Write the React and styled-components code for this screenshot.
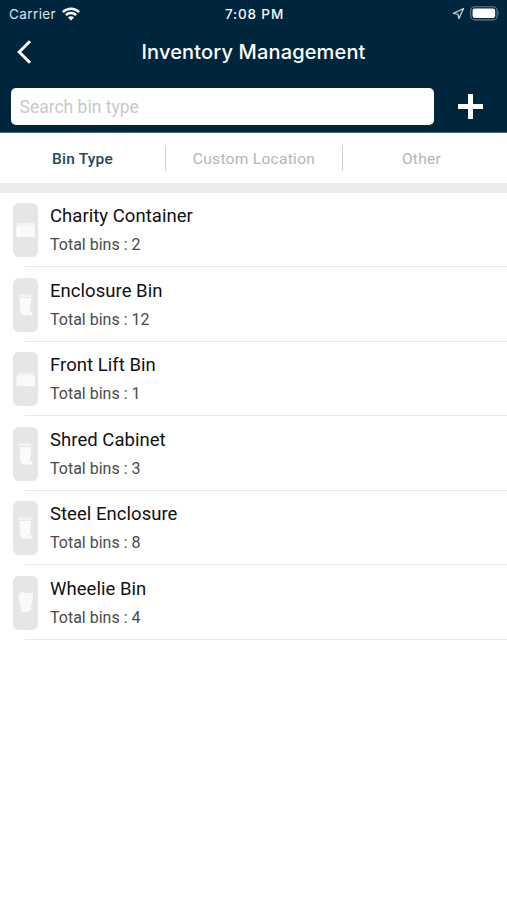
import React from "react";
import styled, { createGlobalStyle } from "styled-components";

const Global = createGlobalStyle`
  * { box-sizing: border-box; }
  body { margin: 0; background: #fff; font-family: Roboto, sans-serif; }
`;

const Screen = styled.main`
  display: flex;
  flex-direction: column;
  height: 900px;
  background: #fff;
  overflow: hidden;
`;

const Header = styled.header`
  height: 133px;
  background: #00263e;
  border-bottom: 1px solid #506a7b;
  color: #fff;
  font-family: Inter, sans-serif;
`;

const StatusBar = styled.div`
  display: grid;
  grid-template-columns: 1fr auto 1fr;
  align-items: center;
  height: 27px;
  padding: 0 7px 0 9px;
`;

const Carrier = styled.div`
  display: flex;
  align-items: center;
  gap: 6px;
  font-size: 13.5px;
  letter-spacing: 0.4px;
  color: #dbe3e8;
`;

const Clock = styled.time`
  font-size: 13.5px;
  font-weight: 500;
  letter-spacing: 0.85px;
  color: #f6f8f9;
`;

const Indicators = styled.div`
  display: flex;
  justify-content: flex-end;
  align-items: center;
  gap: 5px;
`;

const TitleBar = styled.div`
  display: grid;
  grid-template-columns: 48px 1fr 48px;
  align-items: center;
  height: 49.5px;
`;

const IconButton = styled.button`
  display: flex;
  align-items: center;
  justify-content: center;
  padding: 0;
  border: 0;
  background: none;
  color: #fff;
`;

const Title = styled.h1`
  margin: 0;
  padding-top: 1px;
  text-align: center;
  font-size: 20px;
  font-weight: 500;
  letter-spacing: 0.15px;
  white-space: nowrap;
`;

const SearchBar = styled.div`
  display: flex;
  align-items: center;
  height: 37px;
  margin-top: 11px;
  padding-left: 11px;
`;

const SearchInput = styled.input`
  width: 423px;
  height: 37px;
  padding: 1px 8.5px 0;
  border: 0;
  border-radius: 5px;
  background: #fff;
  font: 17.5px Roboto, sans-serif;
  letter-spacing: 0;
  outline: 0;
  &::placeholder { color: #c8c8ca; opacity: 1; }
`;

const AddButton = styled(IconButton)`
  flex: 1;
`;

const Tabs = styled.nav`
  display: grid;
  grid-template-columns: 166px 177px 1fr;
  align-items: center;
  height: 50px;
`;

const Tab = styled.button`
  height: 26px;
  padding: ${(p) => (p.$last ? "2px 7px 0 0" : "2px 0 0")};
  border: 0;
  border-right: ${(p) => (p.$last ? "0" : "1px solid #d2d2d4")};
  background: none;
  font: ${(p) => (p.$active ? 500 : 400)} 15.5px Roboto, sans-serif;
  letter-spacing: ${(p) => (p.$active ? "0.2px" : "0.3px")};
  color: ${(p) => (p.$active ? "#26475b" : "#b5b5b5")};
`;

const Band = styled.div`
  height: 9.5px;
  background: #ebebee;
`;

const List = styled.ul`
  margin: 0;
  padding: 0;
  list-style: none;
`;

const Row = styled.li`
  display: flex;
  height: 74.5px;
  padding: 10.5px 0 0 13px;
  background: linear-gradient(#e8e8e8, #e8e8e8) 25px 100% / 100% 1px no-repeat;
`;

const Thumb = styled.div`
  display: flex;
  align-items: center;
  justify-content: center;
  width: 25px;
  height: 54px;
  border-radius: 6px;
  background: #e6e6e6;
`;

const Info = styled.div`
  margin: 1px 0 0 12px;
`;

const Name = styled.div`
  font-size: 18.5px;
  line-height: 24px;
  letter-spacing: 0.04px;
  color: #111;
`;

const Total = styled.div`
  margin-top: 6px;
  font-size: 16px;
  line-height: 22px;
  letter-spacing: 0;
  color: #4a4a4a;
`;

const WifiIcon = () => (
  <svg width="18" height="14" viewBox="0 0 18 14" fill="none" stroke="#fff" strokeWidth="2.4">
    <path d="M0.9 5.1C5.4.6 12.6.6 17.1 5.1" />
    <path d="M3.9 8.1C6.7 5.3 11.3 5.3 14.1 8.1" />
    <path d="M9 13.6 5.9 10.4C7.6 8.8 10.4 8.8 12.1 10.4Z" fill="#fff" stroke="none" />
  </svg>
);

const LocationIcon = () => (
  <svg width="13" height="13" viewBox="0 0 13 13" fill="none" stroke="#c5d0d7" strokeWidth="1.3" strokeLinejoin="round">
    <path d="M11.5 1.5 1.5 6.4 5.8 7.2 7 11.5Z" />
  </svg>
);

const BatteryIcon = () => (
  <svg width="30" height="15" viewBox="0 0 30 15">
    <rect x="0.7" y="0.7" width="26.4" height="13.2" rx="4" fill="none" stroke="#667f8e" strokeWidth="1.1" />
    <rect x="2.6" y="2.6" width="22.6" height="9.4" rx="2.2" fill="#fff" />
    <path d="M28.2 5Q29.8 7.3 28.2 9.6Z" fill="#667f8e" />
  </svg>
);

const BackIcon = () => (
  <svg width="16" height="24" viewBox="0 0 16 24" fill="none" stroke="#fff" strokeWidth="3">
    <path d="M14 1.2 3.2 12 14 22.8" />
  </svg>
);

const PlusIcon = () => (
  <svg width="25" height="25" viewBox="0 0 25 25" fill="#fff">
    <path d="M10 0h5v10h10v5H15v10h-5V15H0v-5h10z" />
  </svg>
);

const icons = {
  container: (
    <>
      <path d="M4.3 20.2 21.3 20 22 23V34H3.5V23Z" fill="#f5f5f5" />
      <path d="M3.5 23.4H7L8 34H3.5Z" fill="#fff" />
      <path d="M8 23.3H21.5V34H8Z" fill="#fafafa" />
    </>
  ),
  lift: (
    <>
      <path d="M4.5 20.5H21V24H4.5Z" fill="#f1f1f1" />
      <path d="M3.5 23.7H22V34H3.5Z" fill="#fafafa" />
    </>
  ),
  bin: (
    <>
      <path d="M5 17.8 7 16.3H17.8L19 18V19.2H5.2Z" fill="#f3f3f3" />
      <path d="M6.6 20H18L17.2 33.5 16.5 37.5H9.5L7.3 34Z" fill="#fbfbfb" />
      <circle cx="17.3" cy="35.8" r="2.2" fill="#fff" stroke="#e6e6e6" strokeWidth="0.7" />
    </>
  ),
  wheelie: (
    <path d="M9 15.3 12 17 19.8 16.8 19.6 19 20.2 21 18.2 28.5 17.7 34 12.8 36.6 8.2 35.5 7 27.8 5.5 22 6 18Z" fill="#f9f9f9" />
  ),
};

const BinIcon = ({ kind }) => (
  <svg width="25" height="54" viewBox="0 0 25 54">{icons[kind]}</svg>
);

const bins = [
  { name: "Charity Container", total: 2, kind: "container" },
  { name: "Enclosure Bin", total: 12, kind: "bin" },
  { name: "Front Lift Bin", total: 1, kind: "lift" },
  { name: "Shred Cabinet", total: 3, kind: "bin" },
  { name: "Steel Enclosure", total: 8, kind: "bin" },
  { name: "Wheelie Bin", total: 4, kind: "wheelie" },
];

export default function App() {
  return (
    <Screen>
      <Global />
      <Header>
        <StatusBar>
          <Carrier>Carrier<WifiIcon /></Carrier>
          <Clock>7:08 PM</Clock>
          <Indicators><LocationIcon /><BatteryIcon /></Indicators>
        </StatusBar>
        <TitleBar>
          <IconButton aria-label="Back"><BackIcon /></IconButton>
          <Title>Inventory Management</Title>
        </TitleBar>
        <SearchBar>
          <SearchInput placeholder="Search bin type" />
          <AddButton aria-label="Add"><PlusIcon /></AddButton>
        </SearchBar>
      </Header>
      <Tabs>
        <Tab $active>Bin Type</Tab>
        <Tab>Custom Location</Tab>
        <Tab $last>Other</Tab>
      </Tabs>
      <Band />
      <List>
        {bins.map((bin) => (
          <Row key={bin.name}>
            <Thumb><BinIcon kind={bin.kind} /></Thumb>
            <Info>
              <Name>{bin.name}</Name>
              <Total>Total bins : {bin.total}</Total>
            </Info>
          </Row>
        ))}
      </List>
    </Screen>
  );
}
